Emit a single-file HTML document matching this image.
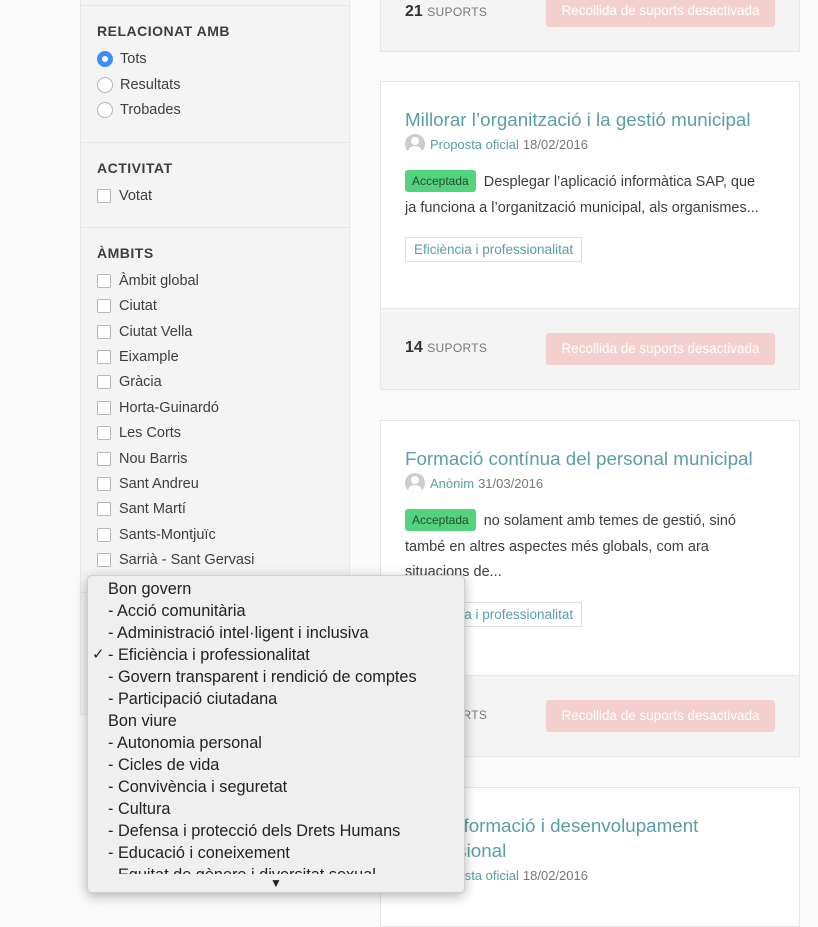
<!DOCTYPE html>
<html><head><meta charset="utf-8"><style>
*{box-sizing:border-box;margin:0;padding:0}
body{width:818px;height:900px;overflow:hidden;background:#fafafa;font-family:"Liberation Sans",sans-serif;color:#3d3d3d;position:relative}
.abs{position:absolute}
.side{left:80px;top:-10px;width:270px;height:725px;background:#f4f4f4;border:1px solid #e8e8e8}
.hr{left:81px;width:268px;height:1px;background:#e6e6e6}
.h{left:97px;font-size:14px;font-weight:bold;letter-spacing:.5px;color:#3d3d3d}
.it{left:97px;font-size:14.5px;color:#3d3d3d;display:flex;align-items:center;height:20px}
.cb{width:14px;height:14px;border:1px solid #b5b5b5;border-radius:2px;background:#fff;margin-right:8px}
.rd{width:16px;height:16px;border:1px solid #b5b5b5;border-radius:50%;background:#fff;margin-right:7px}
.rd.on{border:5px solid #3b8ff2;background:#fff}
.card{left:380px;width:420px;background:#fff;border:1px solid #e6e6e6}
.foot{position:absolute;left:0;right:0;bottom:0;height:81px;background:#f4f4f4;border-top:1px solid #e6e6e6}
.num{position:absolute;left:24px;top:30px;font-size:16px;font-weight:bold;color:#333}
.num span{font-size:12px;font-weight:normal;color:#777;letter-spacing:.3px}
.btn{position:absolute;left:165px;top:24px;width:229px;height:32px;background:#f3d0cd;border-radius:3px;color:#fff;font-size:13.5px;text-align:center;line-height:32px}
.title{position:absolute;left:24px;font-size:18.8px;color:#5a9ea6;line-height:25px}
.meta{position:absolute;left:24px;font-size:13px;color:#777;display:flex;align-items:center}
.meta b{font-weight:normal;color:#5a9ea6;margin-right:4px}
.av{width:20px;height:20px;border-radius:50%;background:#ccc;margin-right:5px;position:relative;overflow:hidden}
.av:before{content:"";position:absolute;left:6px;top:3px;width:8px;height:8px;border-radius:50%;background:#fff}
.av:after{content:"";position:absolute;left:3px;top:12px;width:14px;height:12px;border-radius:50%;background:#fff}
.body{position:absolute;left:24px;width:390px;font-size:14.5px;line-height:25.5px;color:#3d3d3d;white-space:nowrap}
.bad{display:inline-block;background:#53d37d;color:#2a4a33;font-size:12px;padding:0 7px;line-height:22px;border-radius:3px;margin-right:8px;vertical-align:1px}
.tag{position:absolute;left:24px;height:25px;border:1px solid #ddd;padding:0 8px;font-size:13.5px;line-height:23px;color:#5a9ea6}
.dd{left:87px;top:575px;width:378px;height:318px;background:#efefef;border:1px solid #cfcfcf;border-radius:5px;box-shadow:0 3px 12px rgba(0,0,0,.3);overflow:hidden}
.dd div{position:absolute;left:20px;font-size:16.3px;color:#222;line-height:22px;white-space:nowrap}
</style></head><body>
<div class="abs side"></div>
<div class="abs hr" style="top:5px"></div>
<div class="abs h" style="top:23px">RELACIONAT AMB</div>
<div class="abs it" style="top:49px"><span class="rd on"></span>Tots</div>
<div class="abs it" style="top:75px"><span class="rd"></span>Resultats</div>
<div class="abs it" style="top:100px"><span class="rd"></span>Trobades</div>
<div class="abs hr" style="top:142px"></div>
<div class="abs h" style="top:160px">ACTIVITAT</div>
<div class="abs it" style="top:186px"><span class="cb"></span>Votat</div>
<div class="abs hr" style="top:227px"></div>
<div class="abs h" style="top:245px">ÀMBITS</div>
<div class="abs it" style="top:271px"><span class="cb"></span>Àmbit global</div>
<div class="abs it" style="top:296px"><span class="cb"></span>Ciutat</div>
<div class="abs it" style="top:322px"><span class="cb"></span>Ciutat Vella</div>
<div class="abs it" style="top:347px"><span class="cb"></span>Eixample</div>
<div class="abs it" style="top:372px"><span class="cb"></span>Gràcia</div>
<div class="abs it" style="top:398px"><span class="cb"></span>Horta-Guinardó</div>
<div class="abs it" style="top:423px"><span class="cb"></span>Les Corts</div>
<div class="abs it" style="top:449px"><span class="cb"></span>Nou Barris</div>
<div class="abs it" style="top:474px"><span class="cb"></span>Sant Andreu</div>
<div class="abs it" style="top:499px"><span class="cb"></span>Sant Martí</div>
<div class="abs it" style="top:525px"><span class="cb"></span>Sants-Montjuïc</div>
<div class="abs it" style="top:550px"><span class="cb"></span>Sarrià - Sant Gervasi</div>
<div class="abs hr" style="top:592px"></div>

<div class="abs card" style="top:-30px;height:82px"><div class="foot" style="border-top:none"><div class="num" style="top:33px">21 <span>SUPORTS</span></div><div class="btn" style="top:25px">Recollida de suports desactivada</div></div></div>

<div class="abs card" style="top:81px;height:309px">
<div class="title" style="top:25px">Millorar l’organització i la gestió municipal</div>
<div class="meta" style="top:52px"><span class="av"></span><b>Proposta oficial</b>18/02/2016</div>
<div class="body" style="top:88px"><span class="bad">Acceptada</span>Desplegar l’aplicació informàtica SAP, que<br>ja funciona a l’organització municipal, als organismes...</div>
<div class="tag" style="top:155px">Eficiència i professionalitat</div>
<div class="foot"><div class="num">14 <span>SUPORTS</span></div><div class="btn">Recollida de suports desactivada</div></div>
</div>

<div class="abs card" style="top:420px;height:337px">
<div class="title" style="top:25px">Formació contínua del personal municipal</div>
<div class="meta" style="top:52px"><span class="av"></span><b>Anònim</b>31/03/2016</div>
<div class="body" style="top:88px"><span class="bad">Acceptada</span>no solament amb temes de gestió, sinó<br>també en altres aspectes més globals, com ara<br>situacions de...</div>
<div class="tag" style="top:181px">Eficiència i professionalitat</div>
<div class="foot"><div class="num">14 <span>SUPORTS</span></div><div class="btn">Recollida de suports desactivada</div></div>
</div>

<div class="abs card" style="top:787px;height:140px">
<div class="title" style="top:25px;white-space:nowrap">Pla de formació i desenvolupament<br>professional</div>
<div class="meta" style="top:77px"><span class="av"></span><b>Proposta oficial</b>18/02/2016</div>
</div>

<div class="abs dd">
<div style="top:2px">Bon govern</div>
<div style="top:24px">- Acció comunitària</div>
<div style="top:46px">- Administració intel·ligent i inclusiva</div>
<div style="top:68px;left:4px;font-size:15px">✓</div>
<div style="top:68px">- Eficiència i professionalitat</div>
<div style="top:90px">- Govern transparent i rendició de comptes</div>
<div style="top:112px">- Participació ciutadana</div>
<div style="top:134px">Bon viure</div>
<div style="top:156px">- Autonomia personal</div>
<div style="top:178px">- Cicles de vida</div>
<div style="top:200px">- Convivència i seguretat</div>
<div style="top:222px">- Cultura</div>
<div style="top:244px">- Defensa i protecció dels Drets Humans</div>
<div style="top:266px">- Educació i coneixement</div>
<div style="top:288px;height:10px;overflow:hidden">- Equitat de gènere i diversitat sexual</div>
<div style="top:298px;left:0;width:376px;height:20px;background:#efefef"></div>
<div style="top:296px;left:182px;font-size:12px">▼</div>
</div>
</body></html>
